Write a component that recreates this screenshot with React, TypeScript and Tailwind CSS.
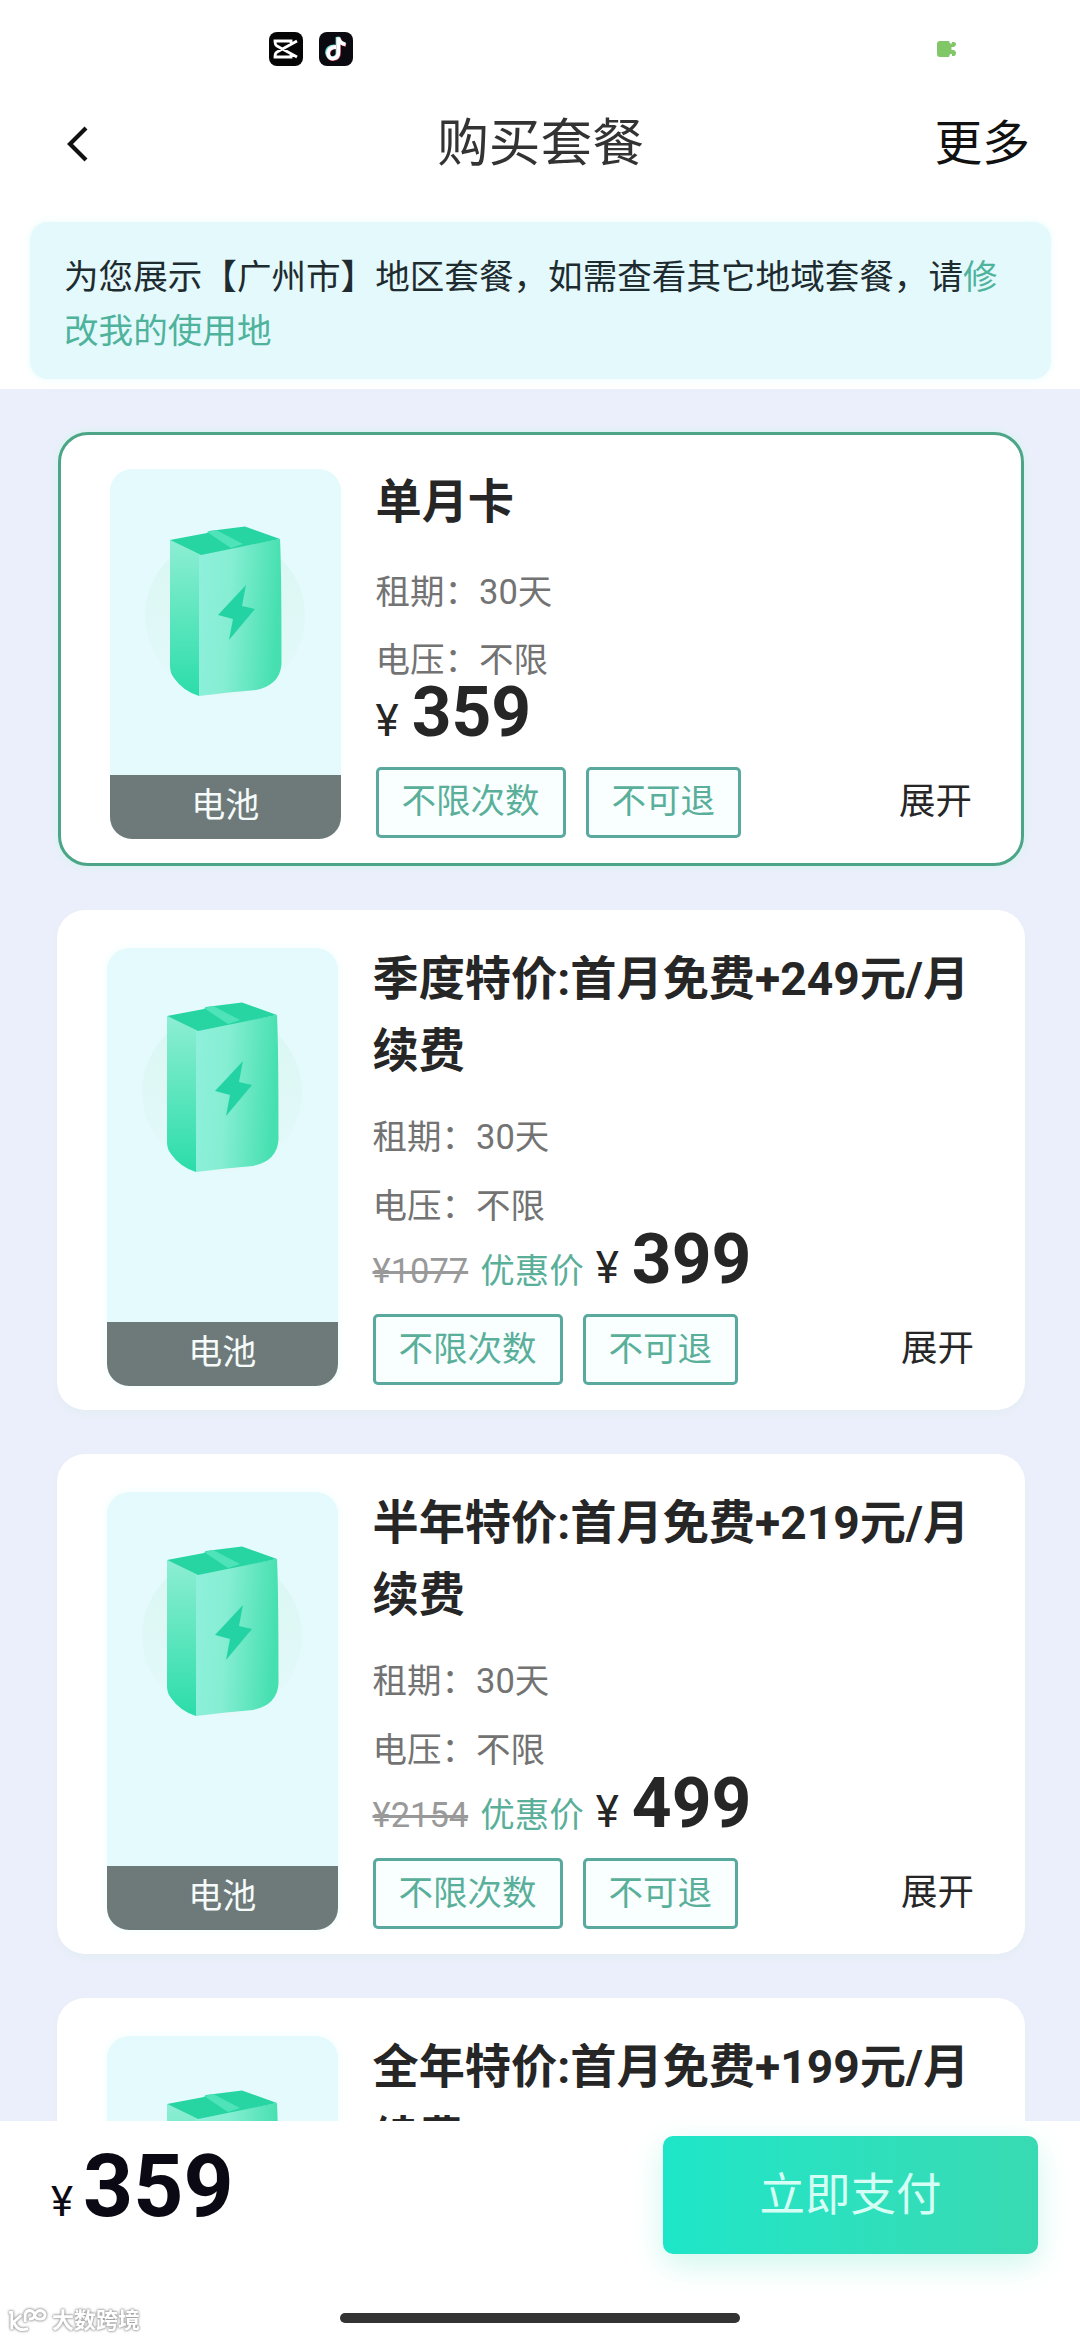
import React from 'react';

type Plan = {
  title: string;
  price: string;
  original?: string;
  selected?: boolean;
};

const plans: Plan[] = [
  { title: '单月卡', price: '359', selected: true },
  { title: '季度特价:首月免费+249元/月续费', price: '399', original: '¥1077' },
  { title: '半年特价:首月免费+219元/月续费', price: '499', original: '¥2154' },
  { title: '全年特价:首月免费+199元/月续费', price: '' },
];

function Battery({ id }: { id: string }) {
  return (
    <svg viewBox="0 0 230 250" className="block h-[250px] w-[230px]">
      <defs>
        <linearGradient id={`front-${id}`} x1="0" y1="0" x2="1" y2="0.12">
          <stop offset="0" stopColor="#8ff0dc" />
          <stop offset="0.4" stopColor="#86eed3" />
          <stop offset="1" stopColor="#46e0b0" />
        </linearGradient>
        <linearGradient id={`side-${id}`} x1="0" y1="0" x2="0" y2="1">
          <stop offset="0" stopColor="#8deed3" />
          <stop offset="1" stopColor="#2bdda9" />
        </linearGradient>
        <linearGradient id={`halo-${id}`} x1="0" y1="0" x2="0" y2="1">
          <stop offset="0" stopColor="#d9f7f2" />
          <stop offset="1" stopColor="#e5f9fb" />
        </linearGradient>
      </defs>
      <circle cx="115" cy="147" r="80" fill={`url(#halo-${id})`} />
      <path d="M60 71 L89 85 V227 Q73 222 64 209 Q60 204 60 197 Z" fill={`url(#side-${id})`} />
      <path d="M89 85 L170 70 Q171.500 100 171.500 195 Q170 216 146 221 Q120 223 89 227 Z" fill={`url(#front-${id})`} />
      <path d="M60 71 L97 64 L99 62 L135 57.500 L170 70 L91 86 Z" fill="#27d5a3" />
      <path d="M97 63 L106 61 L133 75 L121 79 Z" fill="#4fe3ba" />
      <path d="M136 116 L108 146 L123 150 L119 171 L145 140 L132 137 Z" fill="#24d3a3" />
    </svg>
  );
}

function Tag({ children }: { children: React.ReactNode }) {
  return (
    <span className="flex h-[71px] items-center rounded-[5px] border-[3px] border-[#5aa99e] bg-[#f8fffe] px-[23px] text-[34.5px] text-[#5aaf9a]">
      {children}
    </span>
  );
}

function PlanCard({ plan, index }: { plan: Plan; index: number }) {
  const sel = plan.selected;
  return (
    <section
      className={
        sel
          ? 'mr-[56px] ml-[58px] flex h-[434px] shrink-0 rounded-[30px] border-[3px] border-[#4ca587] bg-white pr-[48px] pb-[24.500px] pl-[49px] shadow-[0_0_8px_#cff5ec]'
          : 'mr-[55px] ml-[57px] flex h-[500.500px] shrink-0 rounded-[28px] bg-white pr-[50px] pb-[24.500px] pl-[50px] shadow-[0_4px_8px_#e4edf4]'
      }
    >
      <div className={(sel ? 'mt-[34px]' : 'mt-[38px] shadow-[0_0_10px_#effefc]') + ' flex w-[230.500px] shrink-0 flex-col justify-between overflow-hidden rounded-[22px] bg-[#e5fafd]'}>
        <div className={sel ? 'h-[250px]' : '-mt-[3px] h-[250px]'}>
          <Battery id={String(index)} />
        </div>
        <div className="flex h-[63.500px] shrink-0 items-center justify-center bg-[#6e7a79] pb-[2px] text-[34px] text-[#f4fbfa]">
          电池
        </div>
      </div>
      <div className={(sel ? 'mt-[31px]' : 'mt-[33px]') + ' ml-[35px] flex flex-1 flex-col'}>
        <h2 className={(sel ? 'mb-[19.500px]' : 'mb-[16.500px]') + ' text-[46.200px] leading-[72px] font-bold text-[#262626]'}>{plan.title}</h2>
        {plan.price && (
          <>
            <div className="text-[34.5px] leading-[68.500px] text-[#737373]">
              <p>租期：30天</p>
              <p>电压：不限</p>
            </div>
            <div className={(sel ? 'h-[72px] pt-px' : 'h-[74px] pt-[2.500px]') + ' flex items-baseline leading-[34px]'}>
              {plan.original && (
                <>
                  <span className="text-[34.5px] text-[#999] line-through">{plan.original}</span>
                  <span className="ml-[12px] text-[34.5px] text-[#5aaf9a]">优惠价</span>
                  <span className="w-[12px]" />
                </>
              )}
              <span className="text-[44px] text-[#262626]">¥</span>
              <span className="ml-[13px] text-[69.500px] font-bold text-[#262626]">{plan.price}</span>
            </div>
            <div className="flex items-center">
              <Tag>不限次数</Tag>
              <span className="w-[20px]" />
              <Tag>不可退</Tag>
              <span className="ml-auto pr-px text-[36.500px] text-[#262626]">展开</span>
            </div>
          </>
        )}
      </div>
    </section>
  );
}

function Watermark() {
  return (
    <div className="absolute bottom-[5px] left-[8px] flex items-center gap-[4px] [filter:drop-shadow(0_0_1px_#999)_drop-shadow(0_0_1px_#aaa)]">
      <svg viewBox="0 0 42 28" className="h-[28px] w-[40px]" fill="none" stroke="#fff" strokeWidth="3">
        <path d="M1 5 H4 V23 M14 8 L6 15 Q10 26 21 22" />
        <path d="M18 15 V7 Q19 3 23 3 Q28 4 28 8 Q27 12 22 12" />
        <path d="M28 8 Q30 3 34 3 Q39 4 39 8 Q38 12 34 12 Q29 12 28 8" />
      </svg>
      <span className="text-[22px] leading-[28px] font-bold text-white">大数跨境</span>
    </div>
  );
}

export default function App() {
  return (
    <div className="relative flex h-[2340px] w-[1080px] flex-col overflow-hidden bg-white font-['Roboto','Noto_Sans_CJK_SC',sans-serif]">
      <div className="flex h-[98px] shrink-0 items-center">
        <svg viewBox="0 0 34 34" className="ml-[269px] h-[34px] w-[34px]">
          <rect width="34" height="34" rx="8" fill="#050505" />
          <path d="M28 9 L8 20 Q6 21 6 25 H22 V21.500 M28 25 L8 14 Q6 13 6 9 H22 V12.500" fill="none" stroke="#fff" strokeWidth="2.800" />
        </svg>
        <svg viewBox="0 0 34 34" className="ml-[16px] h-[34px] w-[34px]">
          <rect width="34" height="34" rx="8" fill="#0b0a10" />
          <g fill="none" strokeWidth="3.800">
            <path d="M16 14.500 Q8 14 8 21 Q9 27 14 26 Q19 25 18.500 20 V5 Q20 11 26 12" stroke="#57d5ce" />
            <path d="M17.500 15.500 Q10 15 9.500 22 Q10 28 15 27 Q20 26 20 21 V6 Q21 12 27 13" stroke="#d84a67" />
            <path d="M17 15 Q9 15 9 21.500 Q10 27 14.500 26.500 Q19.500 25.500 19.300 20.500 V5.500 Q20.500 11.500 26.500 12.500" stroke="#fff" />
          </g>
        </svg>
        <svg viewBox="0 0 20 16" className="ml-[584px] h-[16px] w-[20px]">
          <path d="M3 0 H12 L13 2.500 H15 V1 H17 Q19 1 19 4 L17 6 H14.500 V9 H17 L19 11 Q19 15 17 15 H15 V13 H13 L12 16 H3 Q0 16 0 13 V3 Q0 0 3 0Z" fill="#82c767" />
        </svg>
      </div>

      <header className="grid h-[91px] shrink-0 grid-cols-[1fr_auto_1fr] items-center pr-[50px] pl-[66px] leading-[60px]">
        <svg viewBox="0 0 22 36" className="h-[36px] w-[22px]" fill="none" stroke="#111" strokeWidth="4.200">
          <path d="M20 2 L4 18 L20 34" />
        </svg>
        <h1 className="-ml-[15px] text-[51.700px] text-[#333]">购买套餐</h1>
        <span className="text-right text-[47.700px] text-[#111]">更多</span>
      </header>

      <div className="mr-[29px] ml-[30px] mt-[33px] h-[157px] shrink-0 rounded-[18px] bg-[#e4f9fc] pr-[34px] pl-[34px] pt-[28px] text-[34.600px] leading-[54px] text-[#1e2c30] shadow-[0_0_8px_#e8fcfa]">
        为您展示【广州市】地区套餐，如需查看其它地域套餐，请<span className="text-[#4fb39c]">修改我的使用地</span>
      </div>

      <main className="mt-[10px] flex h-[1732px] shrink-0 flex-col gap-[43.500px] overflow-hidden bg-[#ebeffb] pt-[43px]">
        {plans.map((p, i) => (
          <PlanCard key={p.title} plan={p} index={i} />
        ))}
      </main>

      <footer className="flex flex-1 flex-col bg-white">
        <div className="flex items-start justify-between pt-[15px] pr-[42px] pl-[51px]">
          <div className="flex items-baseline leading-[100px] text-[#0b0913]">
            <span className="text-[42px] leading-[60px]">¥</span>
            <span className="ml-[10px] text-[87.500px] font-bold">359</span>
          </div>
          <button className="h-[118px] w-[375px] rounded-[10px] bg-gradient-to-r from-[#1de6c8] to-[#38dab2] pt-[2px] text-[45.500px] text-[#d5fff4] shadow-[0_10px_32px_#cdf7ed]">
            立即支付
          </button>
        </div>
        <div className="mx-auto mt-auto mb-[17px] h-[10px] w-[400px] rounded-full bg-[#333]" />
      </footer>
      <Watermark />
    </div>
  );
}
